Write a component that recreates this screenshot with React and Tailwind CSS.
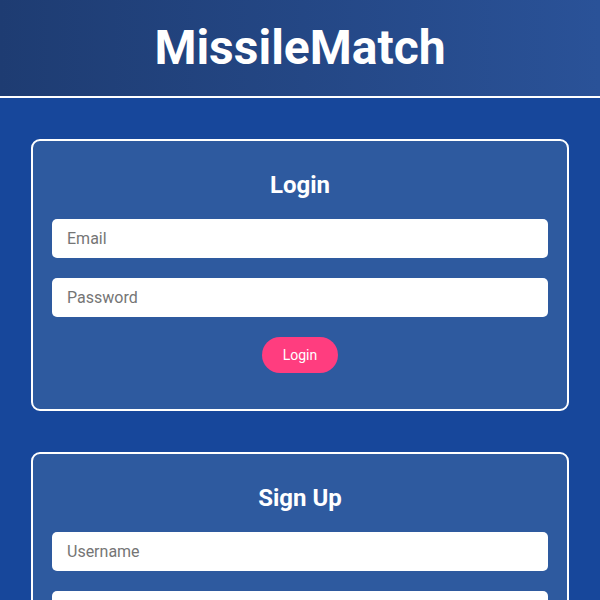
import React from 'react';

function Field({ placeholder, type = 'text' }) {
  return (
    <input
      type={type}
      placeholder={placeholder}
      className="w-full h-[39px] rounded-[5px] bg-white px-[15px] text-base text-gray-800 placeholder:text-[#757575] outline-none"
    />
  );
}

function AuthCard({ title, fields, action }) {
  return (
    <div className="rounded-[9px] border-2 border-white bg-[#2e5a9f] px-[19px] pt-[30px] pb-[36px]">
      <h2 className="text-center text-[24px] leading-[29px] font-bold text-white mb-[19px]">{title}</h2>
      <div className="flex flex-col gap-[20px]">
        {fields.map((f) => (
          <Field key={f.placeholder} {...f} />
        ))}
        <div className="flex justify-center">
          <button className="h-[36px] px-[21px] rounded-full bg-[#ff3d7f] text-[14px] text-white">
            {action}
          </button>
        </div>
      </div>
    </div>
  );
}

export default function App() {
  return (
    <div className="min-h-screen bg-[#17479b] font-['Roboto',sans-serif]">
      <header className="h-[98px] border-b-2 border-white bg-gradient-to-r from-[#1e3c72] to-[#2a5298] flex items-center justify-center">
        <h1 className="text-[48px] font-bold text-white leading-none">MissileMatch</h1>
      </header>
      <main className="px-[31px] pt-[41px] flex flex-col gap-[41px]">
        <AuthCard
          title="Login"
          action="Login"
          fields={[
            { placeholder: 'Email', type: 'email' },
            { placeholder: 'Password', type: 'password' },
          ]}
        />
        <AuthCard
          title="Sign Up"
          action="Sign Up"
          fields={[
            { placeholder: 'Username' },
            { placeholder: 'Email', type: 'email' },
            { placeholder: 'Password', type: 'password' },
          ]}
        />
      </main>
    </div>
  );
}
